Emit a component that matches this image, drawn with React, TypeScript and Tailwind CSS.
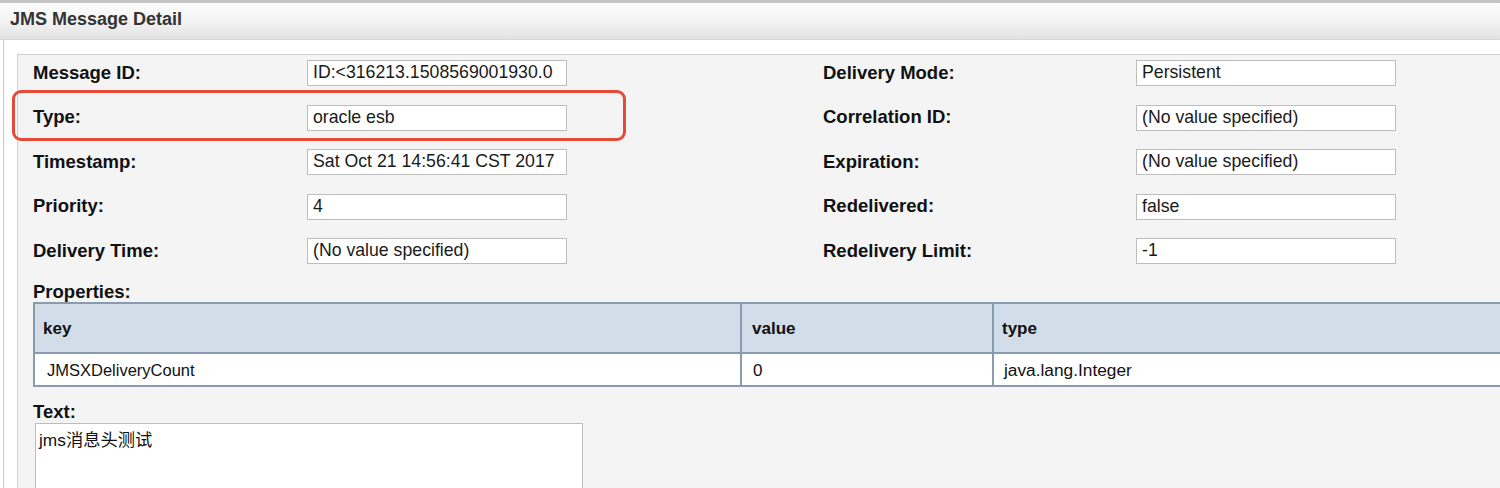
import React from "react";

const FONT = { fontFamily: '"Liberation Sans", Arial, "Noto Sans CJK SC", sans-serif' };

function Field({ label, value, labelW }: { label: string; value: string; labelW: string }) {
  return (
    <div className="flex items-center h-[26px]">
      <div className={`${labelW} shrink-0 text-[18.5px] font-bold text-[#111] leading-none`}>{label}</div>
      <div className="w-[260px] h-[26px] shrink-0 bg-white border border-[#bdbdbd] flex items-center pl-[5px] overflow-hidden whitespace-nowrap text-[17.7px] text-[#1a1a1a] leading-none">
        {value}
      </div>
    </div>
  );
}

export default function App() {
  const left = [
    ["Message ID:", "ID:<316213.1508569001930.0"],
    ["Type:", "oracle esb"],
    ["Timestamp:", "Sat Oct 21 14:56:41 CST 2017"],
    ["Priority:", "4"],
    ["Delivery Time:", "(No value specified)"],
  ];
  const right = [
    ["Delivery Mode:", "Persistent"],
    ["Correlation ID:", "(No value specified)"],
    ["Expiration:", "(No value specified)"],
    ["Redelivered:", "false"],
    ["Redelivery Limit:", "-1"],
  ];
  return (
    <div className="relative w-[1500px] h-[488px] overflow-hidden bg-white" style={FONT}>
      {/* header */}
      <div className="h-[40px] border-t-[3px] border-b border-t-[#c4c4c4] border-b-[#d6d6d6] bg-gradient-to-b from-[#fcfcfc] via-[#f3f3f3] to-[#e3e3e3] flex items-center pl-[10px] pb-[3px]">
        <span className="text-[18px] font-bold text-[#333]">JMS Message Detail</span>
      </div>
      {/* body */}
      <div className="ml-[3px] border-l border-[#c8c8c8] pl-[13px] pt-[14px] h-[460px]">
        <div className="w-[1600px] h-[600px] border border-[#cfcfcf] bg-[#f4f4f4] pl-[15px] pt-[5px]">
          <div className="flex">
            <div className="flex flex-col gap-y-[18.5px]">
              {left.map(([l, v]) => (
                <Field key={l} label={l} value={v} labelW="w-[274px]" />
              ))}
            </div>
            <div className="flex flex-col gap-y-[18.5px] ml-[256px]">
              {right.map(([l, v]) => (
                <Field key={l} label={l} value={v} labelW="w-[313px]" />
              ))}
            </div>
          </div>
          <div className="mt-[18px] h-[20px] flex items-center text-[18.5px] font-bold text-[#111]">Properties:</div>
          <table className="w-[1490px] border-collapse border-2 border-[#8a9bb1] text-[17px] text-[#111]">
            <thead>
              <tr className="bg-[#d2ddea] h-[50px]">
                <th className="w-[707px] text-left font-bold pl-[8px] pt-[2px] border-2 border-[#8a9bb1]">key</th>
                <th className="w-[252px] text-left font-bold pl-[10px] pt-[2px] border-2 border-[#8a9bb1]">value</th>
                <th className="text-left font-bold pl-[8px] pt-[2px] border-2 border-[#8a9bb1]">type</th>
              </tr>
            </thead>
            <tbody>
              <tr className="bg-white h-[33px]">
                <td className="pl-[12px] pt-[2px] border-2 border-[#8a9bb1] text-[16.5px]">JMSXDeliveryCount</td>
                <td className="pl-[11px] pt-[2px] border-2 border-[#8a9bb1]">0</td>
                <td className="pl-[10px] pt-[2px] border-2 border-[#8a9bb1] text-[17.3px]">java.lang.Integer</td>
              </tr>
            </tbody>
          </table>
          <div className="mt-[15px] h-[20px] flex items-center text-[18.5px] font-bold text-[#111]">Text:</div>
          <div className="mt-[1px] ml-[2px] w-[548px] h-[120px] bg-white border border-[#bdbdbd] pl-[3px] pt-[6px] text-[17.3px] text-[#111] leading-[20px]">
            jms消息头测试
          </div>
        </div>
      </div>
      {/* annotation */}
      <div className="absolute left-[12px] top-[90px] w-[614px] h-[51px] border-[3px] border-[#e64a37] rounded-[9px] pointer-events-none" />
    </div>
  );
}
